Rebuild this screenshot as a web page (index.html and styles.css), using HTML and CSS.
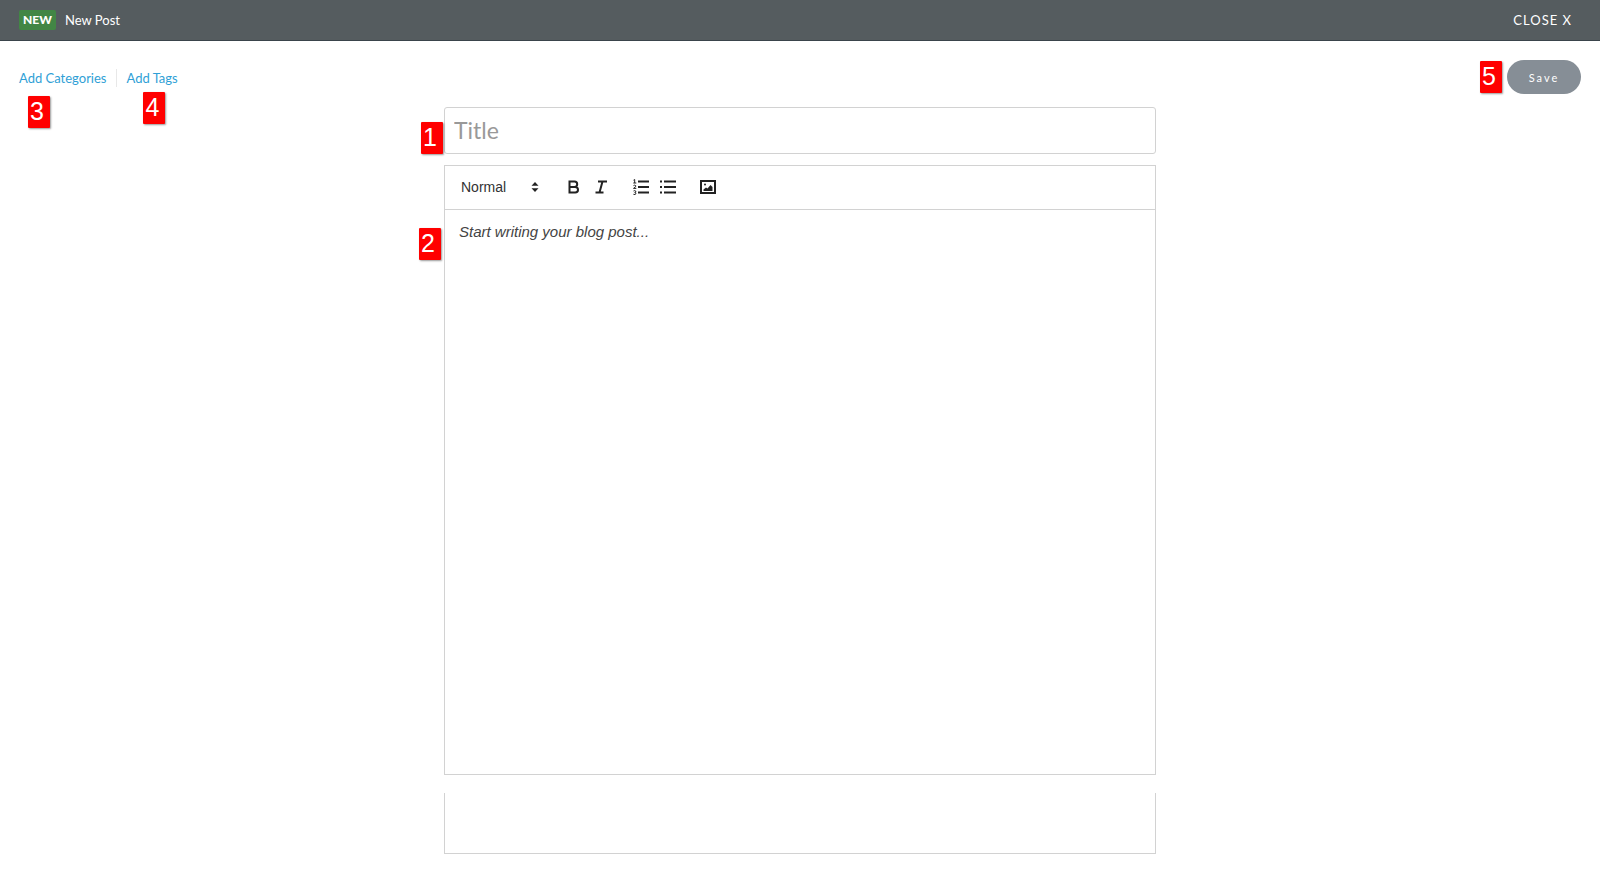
FILE: index.html
```html
<!DOCTYPE html>
<html lang="en">
<head>
    <meta charset="UTF-8">
    <meta name="viewport" content="width=device-width, initial-scale=1.0">
    <title>New Post</title>
    <link rel="stylesheet" href="styles.css">
</head>
<body>
    <header class="top-bar">
        <span class="status">NEW</span>
        <h1 class="page-title">New Post</h1>
        <button type="button" class="close-btn">CLOSE X</button>
    </header>

    <div class="actions">
        <nav class="post-links">
            <div class="link-item">
                <a href="#categories">Add Categories</a>
                <span class="marker marker-categories">3</span>
            </div>
            <div class="link-item">
                <a href="#tags">Add Tags</a>
                <span class="marker marker-tags">4</span>
            </div>
        </nav>
        <div class="save-wrap">
            <span class="marker marker-save">5</span>
            <button type="submit" class="save-btn" form="post-form">Save</button>
        </div>
    </div>

    <form class="post-form" id="post-form">
        <div class="title-field">
            <input type="text" class="title-input" placeholder="Title" aria-label="Title">
            <span class="marker marker-title">1</span>
        </div>

        <div class="editor">
            <div class="toolbar">
                <div class="format-select">
                    <select aria-label="Text style">
                        <option>Normal</option>
                        <option>Heading 1</option>
                        <option>Heading 2</option>
                    </select>
                    <svg width="18" height="18" viewBox="0 0 18 18">
                        <path d="M5.500 7.800 9 4l3.500 3.800zM5.500 10.200 9 14l3.500-3.800z" fill="#222"/>
                    </svg>
                </div>
                <div class="tool-group">
                    <button type="button" class="tool" aria-label="Bold">
                        <svg width="18" height="18" viewBox="0 0 18 18">
                            <path d="M4.500 3.500h5a2.700 2.700 0 0 1 0 5.400h-5zM4.500 8.900h5.700a2.800 2.800 0 0 1 0 5.600H4.500z"/>
                        </svg>
                    </button>
                    <button type="button" class="tool" aria-label="Italic">
                        <svg width="18" height="18" viewBox="0 0 18 18">
                            <path d="M6 3.500h9M3.500 14.500h8M7.500 14.500l3-11"/>
                        </svg>
                    </button>
                </div>
                <div class="tool-group">
                    <button type="button" class="tool" aria-label="Numbered list">
                        <svg width="18" height="18" viewBox="0 0 18 18">
                            <path d="M6 3.500h11M6 9h11M6 14.500h11"/>
                            <path class="thin" d="M1.500 2.200 2.700 1.500v3.500M1.300 5h3M1.500 7.600q1.200-.9 2.200 0t-2.200 2.800h2.800M1.500 13q1.300-.9 2.200 0t-1 1.400q1.700.2 1.200 1.400t-2.500.5"/>
                        </svg>
                    </button>
                    <button type="button" class="tool" aria-label="Bullet list">
                        <svg width="18" height="18" viewBox="0 0 18 18">
                            <path d="M5 3.500h12M5 9h12M5 14.500h12M1 3.500h2M1 9h2M1 14.500h2"/>
                        </svg>
                    </button>
                </div>
                <div class="tool-group">
                    <button type="button" class="tool" aria-label="Image">
                        <svg width="18" height="18" viewBox="0 0 18 18">
                            <rect x="2" y="3" width="14" height="12"/>
                            <circle cx="6" cy="6.500" r="1" class="solid"/>
                            <path class="solid" d="M4.500 13v-1.500l2.500-2 1.500 1L11.500 7l2 2v4z"/>
                        </svg>
                    </button>
                </div>
            </div>
            <textarea class="editor-body" placeholder="Start writing your blog post..." aria-label="Post content"></textarea>
            <span class="marker marker-body">2</span>
        </div>

        <div class="next-panel"></div>
    </form>
</body>
</html>
```

FILE: styles.css
```css
* {
    margin: 0;
    padding: 0;
    box-sizing: border-box;
}
body {
    background: #fff;
    font-family: Lato, 'Open Sans', sans-serif;
    font-size: 13px;
    color: #222;
}
button, input, select, textarea {
    font-family: inherit;
    outline: none;
}
button {
    border: none;
    cursor: pointer;
}

/* header */
.top-bar {
    display: flex;
    align-items: center;
    height: 41px;
    padding: 0 28px 0 19px;
    background: #555c5f;
    border-bottom: 1px solid #3a444b;
    color: #fff;
}
.status {
    width: 37px;
    line-height: 20px;
    border-radius: 2px;
    background: #428645;
    font-size: 12px;
    font-weight: 900;
    text-align: center;
}
.page-title {
    margin-left: 9px;
    font-size: 13px;
    font-weight: normal;
}
.close-btn {
    margin-left: auto;
    background: none;
    color: #fff;
    font-size: 13px;
    letter-spacing: 1px;
}

/* links and save */
.actions {
    display: flex;
    justify-content: space-between;
    align-items: center;
    padding: 19px 19px 13px;
}
.post-links {
    display: flex;
    padding-top: 2px;
}
.link-item {
    position: relative;
    line-height: 18px;
}
.link-item + .link-item {
    margin-left: 10px;
    padding-left: 9px;
    border-left: 1px solid #e8e8e8;
}
.link-item a {
    color: #309fd6;
    text-decoration: none;
}
.save-wrap {
    position: relative;
}
.save-btn {
    width: 74px;
    height: 34px;
    border-radius: 17px;
    background: #868e96;
    color: #fff;
    font-size: 11px;
    letter-spacing: 2px;
}

/* numbered markers */
.marker {
    position: absolute;
    width: 22px;
    height: 32px;
    padding-left: 2px;
    border-radius: 1px;
    background: #f00;
    box-shadow: 1px 1px 2px rgba(0, 0, 0, 0.4);
    color: #fff;
    font-family: 'Liberation Sans', Arial, sans-serif;
    font-size: 25px;
    line-height: 30px;
}
.marker-categories {
    top: 27px;
    left: 9px;
}
.marker-tags {
    top: 23px;
    left: 26px;
}
.marker-save {
    top: 1px;
    right: 79px;
}
.marker-title {
    top: 15px;
    left: -23px;
}
.marker-body {
    top: 62px;
    left: -26px;
}

/* form */
.post-form {
    width: 100%;
    max-width: 712px;
    margin: 0 auto 17px;
}
.title-field {
    position: relative;
    margin-bottom: 11px;
}
.title-input {
    display: block;
    width: 100%;
    height: 47px;
    padding: 0 9px 1px;
    border: 1px solid #d2d2d2;
    border-radius: 3px;
    font-size: 23px;
}
.title-input::placeholder {
    color: #999;
    opacity: 1;
}
.editor {
    position: relative;
    border: 1px solid #d2d2d2;
    font-family: 'Liberation Sans', Arial, sans-serif;
}
.toolbar {
    display: flex;
    align-items: center;
    gap: 13px;
    height: 44px;
    padding: 0 16px 2px;
    border-bottom: 1px solid #d2d2d2;
}
.format-select {
    position: relative;
    width: 86px;
}
.format-select select {
    width: 100%;
    height: 24px;
    border: none;
    appearance: none;
    background: none;
    color: #333;
    font-size: 14px;
}
.format-select svg {
    position: absolute;
    top: 3px;
    right: 3px;
    pointer-events: none;
}
.tool-group {
    display: flex;
}
.tool {
    width: 27px;
    height: 24px;
    background: none;
}
.tool svg {
    display: block;
    margin: auto;
    fill: none;
    stroke: #222;
    stroke-width: 2;
}
.tool .thin {
    stroke-width: 1;
}
.tool .solid {
    fill: #222;
    stroke: none;
}
.editor-body {
    display: block;
    width: 100%;
    min-height: 564px;
    padding: 12px 14px;
    border: none;
    resize: none;
    font-size: 15px;
    line-height: 20px;
}
.editor-body::placeholder {
    color: #444;
    font-style: italic;
    opacity: 1;
}
.next-panel {
    min-height: 61px;
    margin-top: 18px;
    border: 1px solid #d2d2d2;
    border-top: none;
}
```
